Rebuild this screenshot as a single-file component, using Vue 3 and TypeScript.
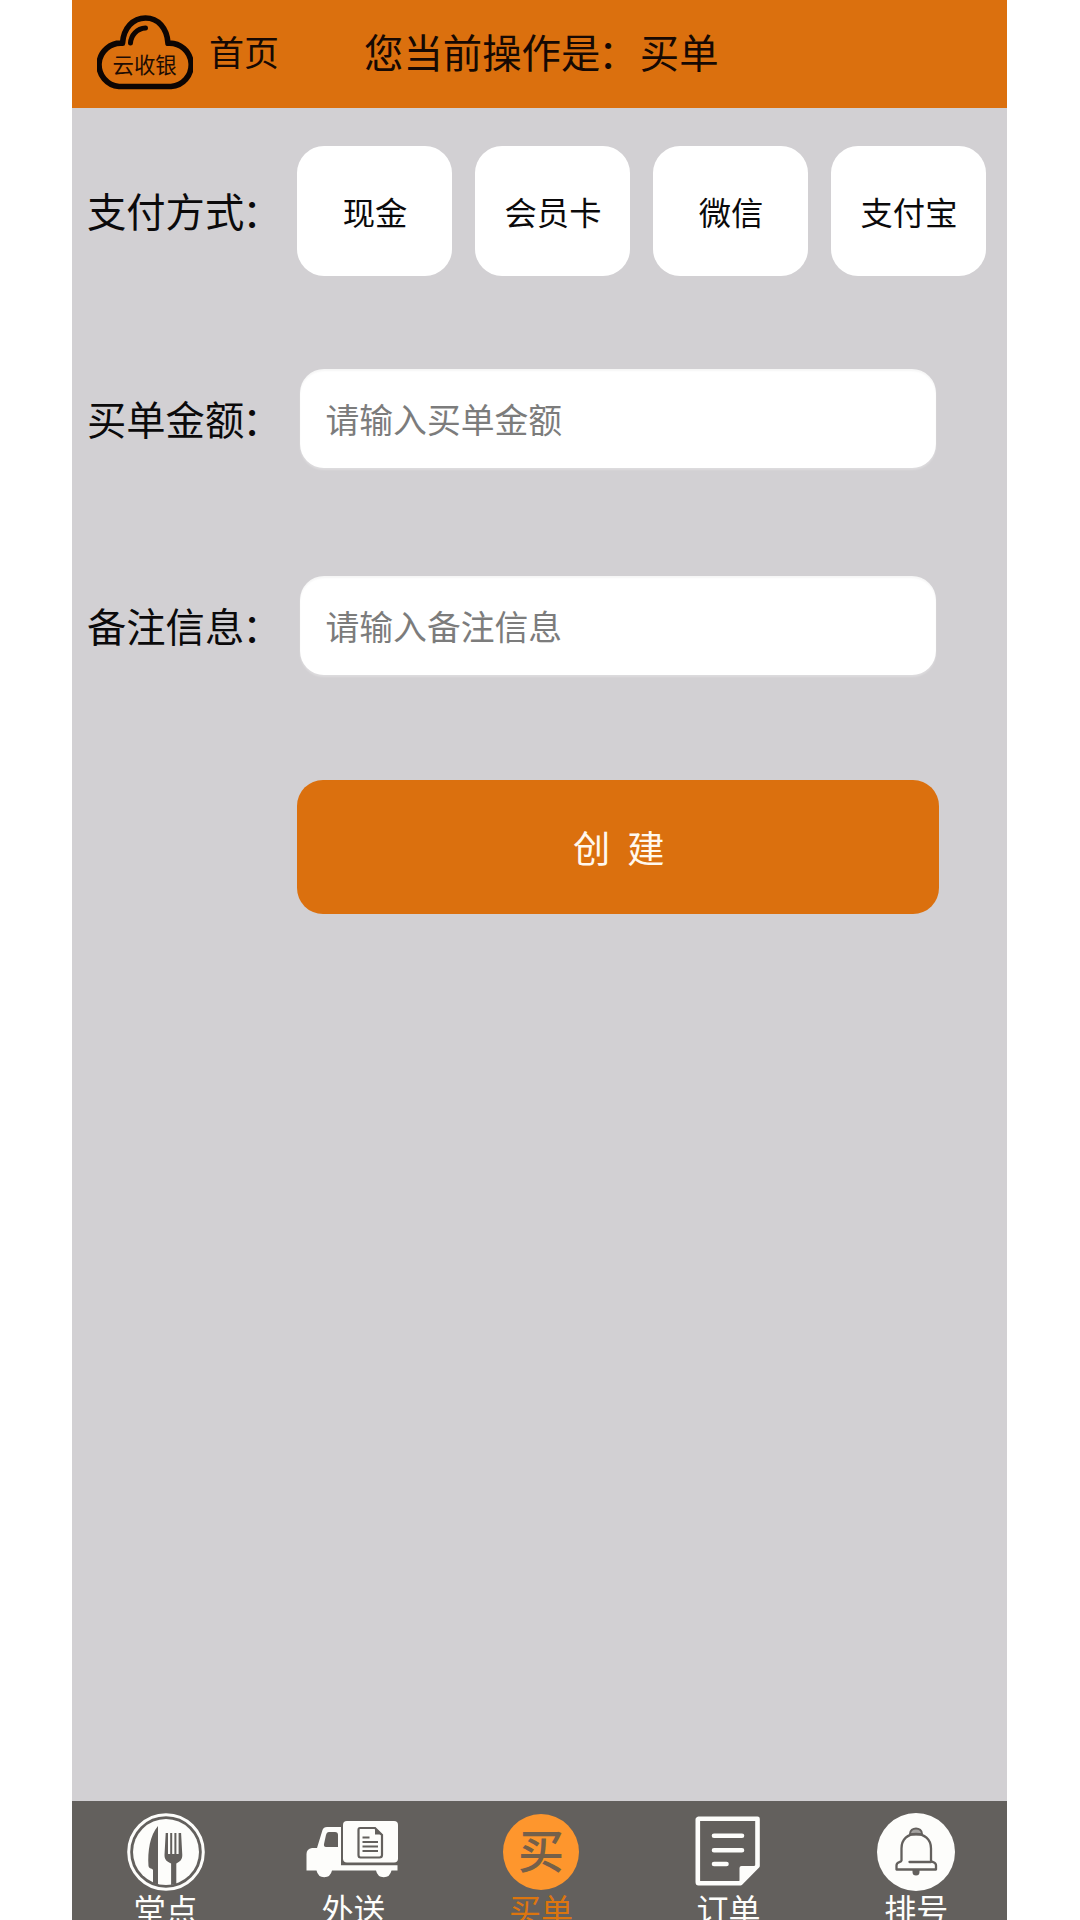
<script setup lang="ts">
import { ref } from 'vue'

type IconName = 'dine' | 'truck' | 'pay' | 'order' | 'bell'

interface Tab {
  icon: IconName
  label: string
}

const payMethods: string[] = ['现金', '会员卡', '微信', '支付宝']
const tabs: Tab[] = [
  { icon: 'dine', label: '堂点' },
  { icon: 'truck', label: '外送' },
  { icon: 'pay', label: '买单' },
  { icon: 'order', label: '订单' },
  { icon: 'bell', label: '排号' },
]

const activeTab = ref<IconName>('pay')
const amount = ref('')
const remark = ref('')
</script>

<template>
  <div class="page">
    <header class="header">
      <svg class="logo" width="96" height="76" viewBox="0 0 96 76">
        <path
          d="M22 71.500 A20.300 20.300 0 0 1 25.500 28.200 C26.500 13 36 3 48.500 3 C61 3 70 13 71 28.200 A21.500 21.500 0 0 1 74 71.500 Z"
          fill="none" stroke="#0d0503" stroke-width="5.600" stroke-linejoin="round" />
        <path d="M33.500 28 C34 20 40 13.500 48.500 13" fill="none" stroke="#0d0503" stroke-width="5" stroke-linecap="round" />
        <text x="15.500" y="57.500" font-size="21.400" fill="#1d0c03">云收银</text>
      </svg>
      <span class="home">首页</span>
      <h1 class="title">您当前操作是<span class="colon">：</span>买单</h1>
    </header>

    <main class="form">
      <div class="row methods">
        <span class="label">支付方式<span class="colon">：</span></span>
        <div class="options">
          <button v-for="m in payMethods" :key="m" class="option" type="button">{{ m }}</button>
        </div>
      </div>
      <div class="row field">
        <label class="label" for="amount">买单金额<span class="colon">：</span></label>
        <input id="amount" v-model="amount" class="input" placeholder="请输入买单金额" />
      </div>
      <div class="row field second">
        <label class="label" for="remark">备注信息<span class="colon">：</span></label>
        <input id="remark" v-model="remark" class="input" placeholder="请输入备注信息" />
      </div>
      <button class="submit" type="button">创 建</button>
    </main>

    <nav class="tabs">
      <a v-for="t in tabs" :key="t.icon" class="tab" :class="{ active: t.icon === activeTab }">
        <span class="icon">
          <svg v-if="t.icon === 'dine'" width="78" height="78" viewBox="0 0 78 78">
            <circle cx="39" cy="39" r="37.300" fill="none" stroke="#fdfdfb" stroke-width="3" />
            <circle cx="39" cy="39" r="33" fill="#fdfdfb" />
            <path d="M31 13 V71.500 L26 70 V57 C26 55.500 22 56 21.500 53 C20.500 38 23 22 31 13 Z" fill="#63605d" />
            <path d="M38.700 20 h2.300 v21 h2.200 v-21 h2 v21 h2.200 v-21 h2 v21 h2.200 v-21 h2.500 l1.200 22 c0 5 -2.500 6.500 -6 8.500 V71 l-5.200 1 V50.500 C40 48.500 37.500 47 37.500 42 Z" fill="#63605d" />
          </svg>
          <svg v-else-if="t.icon === 'truck'" width="94" height="78" viewBox="0 0 94 78">
            <rect x="37" y="8" width="55" height="41.500" rx="4" fill="#fdfdfb" />
            <path d="M35 14 H21 Q17.500 14 16.500 17 L11 35 H6 Q0.500 36 0.500 41 V57.500 H10.500 A8 9 0 0 0 26 57.500 H70 A8 9 0 0 0 85.500 57.500 H91.500 V52.200 H35 Z" fill="#fdfdfb" />
            <path d="M23 19 H29 Q32 19 32 22 V34 H20 Q17.500 34 18 31 L20 22 Q20.700 19 23 19 Z" fill="#63605d" />
            <path d="M54 15 H69 L76 22 V42 Q76 44.500 73.500 44.500 H54.500 Q52.500 44.500 52.500 42 V17 Q52.500 15 54 15 Z" fill="none" stroke="#63605d" stroke-width="2.200" />
            <path d="M69 15 V21.500 H76 Z" fill="#63605d" />
            <path d="M56.500 24.500 h7 M56.500 29 h15.500 M56.500 33.500 h15.500 M56.500 38 h15.500" stroke="#63605d" stroke-width="2" fill="none" />
          </svg>
          <span v-else-if="t.icon === 'pay'" class="disc">买</span>
          <svg v-else-if="t.icon === 'order'" width="68" height="78" viewBox="0 0 68 78">
            <path d="M3.500 5.800 H62.500 V53 L45.500 70.200 H3.500 Q2.800 70.200 2.800 69 V6.500 Z" fill="none" stroke="#fdfdfb" stroke-width="4.600" stroke-linejoin="round" />
            <path d="M44.500 70 V55 Q44.500 53 46.500 53 H63 Z" fill="#fdfdfb" />
            <path d="M19 22.700 H47 M19 37.300 H47 M19 51 H31.500" fill="none" stroke="#fdfdfb" stroke-width="4.600" stroke-linecap="round" />
          </svg>
          <svg v-else width="78" height="78" viewBox="0 0 78 78">
            <circle cx="39" cy="39" r="39" fill="#fdfdfb" />
            <path d="M33 21 C33 13.500 45 13.500 45 21 L42 21.500 H36 Z" fill="#a4a2a0" stroke="#63605d" stroke-width="2" />
            <path d="M24.500 47.500 V35.500 C24.500 26 31 21 39 21 C47 21 54 26 54 35.500 V47.500 C54.500 50 59 48 59 52.500 V56.500 H19.500 V52.500 C19.500 48 24 50 24.500 47.500 Z" fill="none" stroke="#63605d" stroke-width="2.300" stroke-linejoin="round" />
            <path d="M32.500 49 H54" stroke="#63605d" stroke-width="2.300" stroke-linecap="round" />
            <path d="M35.500 57 H42.500 V59 A3.500 3.500 0 0 1 35.500 59 Z" fill="#63605d" />
          </svg>
        </span>
        <span class="tab-label">{{ t.label }}</span>
      </a>
    </nav>
  </div>
</template>

<style>
body {
  background: #fff;
}
</style>

<style scoped>
.page {
  width: 935px;
  height: 1920px;
  margin-left: 72px;
  display: flex;
  flex-direction: column;
  overflow: hidden;
  background: #d2d0d3;
  color: #0b0a0b;
  font-family: 'Noto Sans CJK SC', 'Noto Sans', sans-serif;
}

button,
input {
  font-family: inherit;
  border: 0;
  margin: 0;
}

.header {
  height: 108px;
  flex: none;
  display: flex;
  align-items: center;
  box-sizing: border-box;
  padding: 0 0 6px 25px;
  background: #db700e;
  color: #160903;
}

.logo {
  flex: none;
  margin-top: 4px;
}

.home {
  margin-left: 16px;
  font-size: 35px;
  line-height: 50px;
  white-space: nowrap;
}

.title {
  margin: 0 0 0 85px;
  font-size: 39.400px;
  font-weight: 400;
  line-height: 56px;
  white-space: nowrap;
}

.colon {
  margin: 0 2px 0 -2px;
}

.form {
  flex: 1;
  padding: 38px 0 0 15px;
}

.row {
  display: flex;
  align-items: center;
}

.label {
  width: 210px;
  flex: none;
  padding-bottom: 2px;
  font-size: 39.300px;
  line-height: 56px;
  white-space: nowrap;
}

.options {
  display: flex;
  gap: 23px;
}

.option {
  width: 155px;
  height: 130px;
  padding: 0 0 0 1px;
  border-radius: 27px;
  background: #fff;
  color: #0b0a0b;
  font-size: 32.300px;
  white-space: nowrap;
}

.field {
  margin-top: 93px;
}

.field.second {
  margin-top: 108px;
}

.input {
  width: 636px;
  height: 99px;
  margin-left: 2.500px;
  box-sizing: border-box;
  padding: 0 26px;
  border-radius: 24px;
  background: #fff;
  box-shadow: 0 2px 2px rgba(255, 255, 255, 0.25), inset 0 2px 2px rgba(0, 0, 0, 0.04);
  font-size: 33.800px;
  outline: none;
}

.input::placeholder {
  color: #7c7c7c;
  opacity: 1;
}

.submit {
  display: block;
  width: 641.500px;
  height: 134px;
  margin: 105px 0 0 210px;
  padding: 0 0 1px 2px;
  border-radius: 26px;
  background: #db700e;
  color: #fff8ee;
  font-size: 37.300px;
  word-spacing: 8.500px;
}

.tabs {
  width: 938px;
  height: 119px;
  flex: none;
  display: flex;
  box-sizing: border-box;
  padding-top: 12px;
  background: #63605d;
}

.tab {
  flex: 1;
  display: flex;
  flex-direction: column;
  align-items: center;
  color: #fdfdfb;
}

.icon {
  height: 78px;
  flex: none;
  display: flex;
  align-items: center;
}

.disc {
  width: 76px;
  height: 76px;
  margin-bottom: 1px;
  border-radius: 50%;
  background: #fe962d;
  color: #75604a;
  font-size: 46px;
  font-weight: 500;
  line-height: 68px;
  text-align: center;
}

.tab-label {
  font-size: 32px;
  line-height: 46px;
  margin-top: -6px;
  white-space: nowrap;
}

.tab.active .tab-label {
  color: #dc750f;
}
</style>
